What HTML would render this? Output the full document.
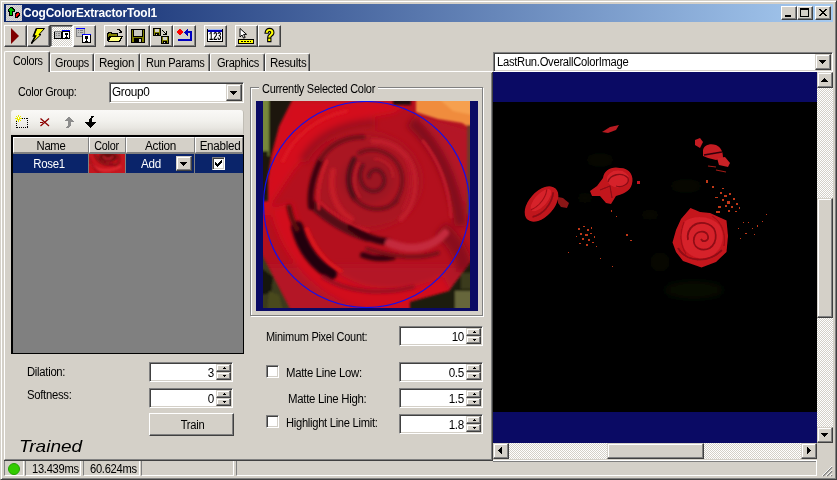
<!DOCTYPE html>
<html>
<head>
<meta charset="utf-8">
<title>CogColorExtractorTool1</title>
<style>
html,body{margin:0;padding:0;}
body{width:837px;height:480px;overflow:hidden;background:#d4d0c8;position:relative;
 font-family:"Liberation Sans",sans-serif;font-size:12px;color:#000;letter-spacing:-0.3px;}
.a{position:absolute;box-sizing:border-box;}
.t{position:absolute;white-space:nowrap;line-height:13px;transform:scaleX(0.93);transform-origin:0 0;}
.t.c{transform-origin:50% 0;}
.t.r{transform-origin:100% 0;}
svg{position:absolute;overflow:visible;}
.btn{border:1px solid;border-color:#fff #404040 #404040 #fff;box-shadow:inset -1px -1px 0 #808080;background:#d4d0c8;}
.sbtn{border:1px solid;border-color:#d4d0c8 #404040 #404040 #d4d0c8;box-shadow:inset -1px -1px 0 #808080, inset 1px 1px 0 #fff;background:#d4d0c8;}
.sunken{border:1px solid;border-color:#808080 #fff #fff #808080;box-shadow:inset 1px 1px 0 #404040, inset -1px -1px 0 #d4d0c8;background:#fff;}
.checker{background-image:conic-gradient(#fff 25%,#d4d0c8 0 50%,#fff 0 75%,#d4d0c8 0);background-size:2px 2px;}
.tab{border:1px solid;border-color:#fff #404040 transparent #fff;border-bottom:0;border-radius:2px 2px 0 0;box-shadow:inset -1px 0 0 #808080;}
.px{shape-rendering:crispEdges;}
.hd{background:#d4d0c8;border:1px solid;border-color:#fff #808080 #808080 #fff;}
.sp{border:1px solid;border-color:#808080 #fff #fff #808080;border-top:0;}
</style>
</head>
<body>
<!-- window frame -->
<div class="a" style="left:0;top:0;width:837px;height:480px;border:1px solid;border-color:#d4d0c8 #404040 #404040 #d4d0c8;box-shadow:inset 1px 1px 0 #fff, inset -1px -1px 0 #808080;"></div>

<!-- title bar -->
<div class="a" style="left:4px;top:4px;width:829px;height:18px;background:linear-gradient(90deg,#0a246a 0%,#a6caf0 100%);"></div>
<div class="a" style="left:6px;top:5px;width:16px;height:16px;background:#c8c8c8;background-image:conic-gradient(#d8d8d8 25%,#c4c4c4 0 50%,#d8d8d8 0 75%,#c4c4c4 0);background-size:2px 2px;"></div>
<svg class="px" style="left:6px;top:5px" width="16" height="16" viewBox="0 0 16 16">
 <path d="M4 2h3v1h1v1h1v3h-2v4h-4v-4h-1v-3h1v-1h1z" fill="#000"/>
 <path d="M4 3h2v1h1v1h1v1h-2v4h-2v-4h-1v-2h1z" fill="#00c000"/>
 <path d="M9 8h1v-1h3v1h1v3h-1v1h-1v1h-3z" fill="#000"/>
 <path d="M10 9h1v-1h2v2h-1v1h-1v1h-1z" fill="#ff0000"/>
</svg>
<div class="t" style="left:23px;top:6px;color:#fff;font-weight:bold;font-size:12px;line-height:14px;letter-spacing:-0.14px;transform:scaleX(0.99);">CogColorExtractorTool1</div>
<!-- caption buttons -->
<div class="a btn" style="left:781px;top:6px;width:16px;height:14px;"></div>
<div class="a" style="left:785px;top:15px;width:6px;height:2px;background:#000;"></div>
<div class="a btn" style="left:797px;top:6px;width:16px;height:14px;"></div>
<div class="a" style="left:800px;top:8px;width:9px;height:9px;border:1px solid #000;border-top-width:2px;"></div>
<div class="a btn" style="left:815px;top:6px;width:16px;height:14px;"></div>
<svg class="px" style="left:819px;top:9px" width="8" height="7" viewBox="0 0 8 7"><path d="M0 0h2v1h1v1h2v-1h1v-1h2v1h-1v1h-1v1h-1v1h1v1h1v1h1v1h-2v-1h-1v-1h-2v1h-1v1h-2v-1h1v-1h1v-1h1v-1h-1v-1h-1v-1h-1z" fill="#000"/></svg>

<!-- TOOLBAR -->
<div class="a btn" style="left:4px;top:25px;width:23px;height:22px;"></div>
<div class="a btn" style="left:27px;top:25px;width:23px;height:22px;"></div>
<div class="a checker" style="left:50px;top:25px;width:23px;height:22px;border:1px solid;border-color:#404040 #fff #fff #404040;box-shadow:inset 1px 1px 0 #808080;"></div>
<div class="a btn" style="left:73px;top:25px;width:23px;height:22px;"></div>
<div class="a btn" style="left:104px;top:25px;width:23px;height:22px;"></div>
<div class="a btn" style="left:127px;top:25px;width:23px;height:22px;"></div>
<div class="a btn" style="left:150px;top:25px;width:23px;height:22px;"></div>
<div class="a btn" style="left:173px;top:25px;width:23px;height:22px;"></div>
<div class="a btn" style="left:204px;top:25px;width:23px;height:22px;"></div>
<div class="a btn" style="left:235px;top:25px;width:23px;height:22px;"></div>
<div class="a btn" style="left:258px;top:25px;width:23px;height:22px;"></div>
<!-- toolbar icons -->
<svg style="left:7px;top:28px" width="16" height="16" viewBox="0 0 16 16"><path d="M4 0L12 8L4 16z" fill="#800000"/></svg>
<svg style="left:30px;top:28px" width="16" height="16" viewBox="0 0 16 16"><path d="M6.5 0.5h8l-5.5 6h2l-9.5 9l4-7.5h-2z" fill="#ffff00" stroke="#000" stroke-width="1"/><path d="M6.5 0.5l-3 7.5h2l-4 7.5" fill="none" stroke="#000" stroke-width="1.6"/></svg>
<svg class="px" style="left:54px;top:29px" width="16" height="16" viewBox="0 0 16 16">
 <rect x="0" y="2" width="8" height="8" fill="#000"/><rect x="1" y="3" width="6" height="6" fill="#c0c0c0"/><rect x="0" y="2" width="8" height="1" fill="#808080"/>
 <rect x="8" y="2" width="8" height="8" fill="#000"/><rect x="9" y="3" width="6" height="6" fill="#fff"/><rect x="8" y="1" width="8" height="1" fill="#0000ff"/>
 <rect x="11" y="4" width="3" height="2" fill="#000"/><rect x="12" y="6" width="1" height="2" fill="#000"/><rect x="11" y="8" width="3" height="1" fill="#000"/>
 <rect x="2" y="4" width="1" height="1" fill="#808080"/><rect x="4" y="4" width="2" height="1" fill="#808080"/><rect x="2" y="6" width="1" height="1" fill="#808080"/><rect x="4" y="6" width="2" height="1" fill="#808080"/>
</svg>
<svg class="px" style="left:76px;top:28px" width="16" height="16" viewBox="0 0 16 16">
 <rect x="0" y="0" width="9" height="9" fill="#808080"/><rect x="1" y="1" width="7" height="7" fill="#c0c0c0"/><rect x="0" y="0" width="9" height="1" fill="#0000ff"/>
 <rect x="2" y="2" width="1" height="1" fill="#808080"/><rect x="4" y="2" width="3" height="1" fill="#808080"/><rect x="2" y="4" width="1" height="1" fill="#808080"/><rect x="4" y="4" width="3" height="1" fill="#808080"/>
 <rect x="6" y="6" width="9" height="9" fill="#000"/><rect x="7" y="7" width="7" height="7" fill="#fff"/><rect x="6" y="6" width="9" height="1" fill="#0000ff"/>
 <rect x="9" y="8" width="3" height="3" fill="#000"/><rect x="10" y="11" width="1" height="2" fill="#000"/><rect x="9" y="13" width="3" height="1" fill="#000"/>
</svg>
<svg class="px" style="left:107px;top:28px" width="16" height="16" viewBox="0 0 16 16">
 <path d="M0 5h1v-1h4v1h6v3h-8l-2 5h-1z" fill="#000"/><path d="M1 6h1v-1h2v1h6v2h-8l-1 3z" fill="#808000"/>
 <path d="M3 8h13l-3 6h-12z" fill="#000"/><path d="M4 9h10l-2 4h-10z" fill="#ffff80"/>
 <path d="M9 2h1v-1h3v1h1v1h1v-1h0v3h-3v-1h1v-1h-1v-1h-2z" fill="#000"/>
</svg>
<svg class="px" style="left:131px;top:29px" width="14" height="14" viewBox="0 0 14 14">
 <rect x="0" y="0" width="14" height="14" fill="#000"/><rect x="1" y="1" width="12" height="12" fill="#808000"/>
 <rect x="3" y="1" width="8" height="6" fill="#c8c8c0"/><rect x="2" y="1" width="1" height="7" fill="#000"/><rect x="11" y="1" width="1" height="7" fill="#000"/><rect x="2" y="7" width="10" height="1" fill="#000"/>
 <rect x="3" y="9" width="8" height="4" fill="#000"/><rect x="8" y="10" width="2" height="3" fill="#d4d0c8"/>
</svg>
<svg class="px" style="left:153px;top:28px" width="16" height="16" viewBox="0 0 16 16">
 <rect x="0" y="0" width="8" height="8" fill="#000"/><rect x="1" y="1" width="6" height="6" fill="#808000"/><rect x="2" y="1" width="4" height="3" fill="#d4d0c8"/><rect x="2" y="5" width="4" height="2" fill="#000"/><rect x="3" y="6" width="1" height="1" fill="#d4d0c8"/>
 <rect x="8" y="8" width="8" height="8" fill="#000"/><rect x="9" y="9" width="6" height="6" fill="#808000"/><rect x="10" y="9" width="4" height="3" fill="#d4d0c8"/><rect x="10" y="13" width="4" height="2" fill="#000"/><rect x="11" y="14" width="1" height="1" fill="#d4d0c8"/>
 <path d="M9 2h1v1h1v1h1v1h1v-2h1v4h-4v-1h2v-1h-1v-1h-1v-1h-1z" fill="#000"/>
</svg>
<svg class="px" style="left:176px;top:28px" width="16" height="16" viewBox="0 0 16 16">
 <path d="M3 1h2v1h1v1h1v2h-1v1h-1v1h-2v-1h-1v-1h-1v-2h1v-1h1z" fill="#ff0000"/>
 <path d="M8 4h1v-1h1v-1h1v-1h1v2h4v10h-14v-2h12v-6h-2v3h-1v-1h-1v-1h-1v-1h-1z" fill="#0000c0"/>
</svg>
<svg class="px" style="left:207px;top:28px" width="16" height="16" viewBox="0 0 16 16">
 <rect x="0" y="1" width="16" height="13" fill="#000"/><rect x="1" y="2" width="14" height="11" fill="#fff"/><rect x="1" y="1" width="14" height="1" fill="#a0b8f0"/><rect x="1" y="2" width="14" height="2" fill="#0000c0"/>
 
</svg>
<svg class="px" style="left:238px;top:28px" width="16" height="16" viewBox="0 0 16 16">
 <path d="M2 0.5v8.5l2-2l1.6 3.2l1.6-0.8l-1.6-3h3z" fill="#fff" stroke="#000" stroke-width="1" shape-rendering="auto"/>
 <rect x="0" y="11" width="16" height="5" fill="#000"/><rect x="1" y="12" width="14" height="3" fill="#ffff00"/>
 <rect x="3" y="13" width="2" height="1" fill="#000"/><rect x="6" y="13" width="2" height="1" fill="#000"/><rect x="9" y="13" width="2" height="1" fill="#000"/><rect x="12" y="13" width="1" height="1" fill="#000"/>
</svg>
<div class="t c" style="left:207px;top:31px;width:16px;text-align:center;font-size:10px;line-height:11px;letter-spacing:0;font-weight:bold;transform:scaleX(0.74);">123</div>
<div class="t c" style="left:259px;top:27px;width:21px;text-align:center;font-size:16px;line-height:18px;font-weight:bold;letter-spacing:0;color:#ffff00;-webkit-text-stroke:2.4px #000;paint-order:stroke fill;transform:scaleX(0.94);">?</div>

<!-- TAB STRIP -->
<!-- tab page border -->
<div class="a" style="left:4px;top:71px;width:489px;height:388px;border-top:1px solid #fff;border-left:1px solid #fff;"></div>
<div class="a tab" style="left:50px;top:53px;width:44px;height:18px;"></div>
<div class="a tab" style="left:94px;top:53px;width:46px;height:18px;"></div>
<div class="a tab" style="left:140px;top:53px;width:70px;height:18px;"></div>
<div class="a tab" style="left:210px;top:53px;width:55px;height:18px;"></div>
<div class="a tab" style="left:265px;top:53px;width:45px;height:18px;"></div>
<div class="a tab" style="left:4px;top:51px;width:46px;height:21px;background:#d4d0c8;"></div>
<div class="t" style="left:13px;top:55px;transform:scaleX(0.9);">Colors</div>
<div class="t" style="left:55px;top:57px;transform:scaleX(0.9);">Groups</div>
<div class="t" style="left:99px;top:57px;transform:scaleX(0.97);">Region</div>
<div class="t" style="left:146px;top:57px;transform:scaleX(0.92);">Run Params</div>
<div class="t" style="left:217px;top:57px;transform:scaleX(0.92);">Graphics</div>
<div class="t" style="left:270px;top:57px;transform:scaleX(0.96);">Results</div>

<!-- Color Group -->
<div class="t" style="left:18px;top:86px;transform:scaleX(0.9);">Color Group:</div>
<div class="a sunken" style="left:109px;top:82px;width:135px;height:21px;"></div>
<div class="t" style="left:112px;top:86px;transform:scaleX(0.98);">Group0</div>
<div class="a sbtn" style="left:226px;top:84px;width:16px;height:17px;"></div>
<svg class="px" style="left:230px;top:91px" width="7" height="4" viewBox="0 0 7 4"><path d="M0 0h7v1h-1v1h-1v1h-1v1h-1v-1h-1v-1h-1v-1h-1z" fill="#000"/></svg>

<!-- mini toolstrip -->
<div class="a" style="left:11px;top:110px;width:233px;height:24px;background:linear-gradient(180deg,#faf9f7 0%,#f2f1ed 45%,#e8e6e1 75%,#d9d6cf 100%);border-radius:3px 3px 0 0;border-right:1px solid #c0bdb5;"></div>
<svg class="px" style="left:15px;top:115px" width="14" height="14" viewBox="0 0 14 14">
 <path d="M3 3h1v1h-1zM5 3h1v1h-1zM7 3h1v1h-1zM9 3h1v1h-1zM11 3h2v1h-2zM12 5h1v1h-1zM12 7h1v1h-1zM12 9h1v1h-1zM12 11h1v2h-1zM10 12h1v1h-1zM8 12h1v1h-1zM6 12h1v1h-1zM4 12h1v1h-1zM2 12h1v1h-2v-1zM1 10h1v1h-1zM1 8h1v1h-1zM1 6h1v1h-1z" fill="#000"/>
 <path d="M3 0h1v2h1v-1h1v1h-1v1h2v1h-2v1h1v1h-1v-1h-1v2h-1v-2h-1v1h-1v-1h1v-1h-2v-1h2v-1h-1v-1h1v1h1z" fill="#e8e800"/>
 <rect x="3" y="2" width="1" height="2" fill="#fff"/>
</svg>
<svg style="left:40px;top:118px" width="10" height="9" viewBox="0 0 10 9"><path d="M0.5 0.5L9 8M9 0.5L0.5 8" stroke="#8c0000" stroke-width="1.3" fill="none"/><path d="M0 4.5h3" stroke="#8c0000" stroke-width="1"/></svg>
<svg class="px" style="left:63px;top:116px" width="11" height="12" viewBox="0 0 11 12"><path d="M5 0h1v1h1v1h1v1h1v1h1v1h1v1h-3v4h-1v1h-1v1h-3v-1h1v-1h1v-5h-3v-1h1v-1h1v-1h1v-1h1z" fill="#8c8c8c"/></svg>
<svg class="px" style="left:85px;top:116px" width="12" height="12" viewBox="0 0 12 12"><path d="M6 0h3v1h-1v1h-1v4h4v1h-1v1h-1v1h-1v1h-1v1h-1v1h-1v-1h-1v-1h-1v-1h-1v-1h-1v-1h-1v-1h4v-3h1v-1h1z" fill="#000"/></svg>

<!-- grid -->
<div class="a" style="left:11px;top:135px;width:233px;height:219px;background:#808080;border:solid #000;border-width:2px 1px 1px 2px;"></div>
<!-- header cells -->
<div class="a hd" style="left:13px;top:137px;width:76px;height:16px;"></div>
<div class="a hd" style="left:89px;top:137px;width:37px;height:16px;"></div>
<div class="a hd" style="left:126px;top:137px;width:69px;height:16px;"></div>
<div class="a hd" style="left:195px;top:137px;width:48px;height:16px;"></div>
<div class="t c" style="left:13px;top:140px;width:76px;text-align:center;transform:scaleX(0.94);">Name</div>
<div class="t c" style="left:88px;top:140px;width:37px;text-align:center;transform:scaleX(0.9);">Color</div>
<div class="t c" style="left:126px;top:140px;width:69px;text-align:center;transform:scaleX(0.98);">Action</div>
<div class="t c" style="left:196px;top:140px;width:48px;text-align:center;transform:scaleX(0.97);">Enabled</div>
<!-- selected row -->
<div class="a" style="left:13px;top:154px;width:230px;height:19px;background:#0a246a;"></div>
<div class="a" style="left:88px;top:154px;width:1px;height:19px;background:#808080;"></div>
<div class="a" style="left:125px;top:154px;width:1px;height:19px;background:#808080;"></div>
<div class="a" style="left:194px;top:154px;width:1px;height:19px;background:#808080;"></div>
<div class="t c" style="left:11px;top:158px;width:76px;text-align:center;color:#fff;transform:scaleX(0.95);">Rose1</div>
<svg style="left:89px;top:154px" width="36" height="19" viewBox="0 0 36 19">
 <defs><filter id="tb"><feGaussianBlur stdDeviation="0.8"/></filter><clipPath id="tc"><rect width="36" height="19"/></clipPath></defs>
 <g clip-path="url(#tc)"><rect width="36" height="19" fill="#c4161e"/>
 <g filter="url(#tb)" fill="none">
  <ellipse cx="19" cy="3" rx="9" ry="5" fill="#6a0a10"/>
  <path d="M6 0C8 8 16 12 26 10" stroke="#7a0c12" stroke-width="2"/>
  <path d="M28 0C32 4 30 10 26 12" stroke="#8a0e14" stroke-width="2"/>
  <path d="M14 2C16 6 22 6 24 2" stroke="#d02830" stroke-width="1.5"/>
  <path d="M2 10C8 18 22 18 32 12" stroke="#e02a32" stroke-width="2.5"/>
  <path d="M0 4C2 12 6 16 12 19" stroke="#9a1018" stroke-width="1.5"/>
 </g></g>
</svg>
<div class="t c" style="left:126px;top:158px;width:50px;text-align:center;color:#fff;transform:scaleX(0.97);">Add</div>
<div class="a sbtn" style="left:176px;top:156px;width:16px;height:15px;"></div>
<svg class="px" style="left:180px;top:162px" width="7" height="4" viewBox="0 0 7 4"><path d="M0 0h7v1h-1v1h-1v1h-1v1h-1v-1h-1v-1h-1v-1h-1z" fill="#000"/></svg>
<div class="a sunken" style="left:212px;top:157px;width:13px;height:13px;"></div>
<svg class="px" style="left:215px;top:160px" width="7" height="7" viewBox="0 0 7 7"><path d="M0 2h1v1h1v1h1v-1h1v-1h1v-1h1v-1h1v3h-1v1h-1v1h-1v1h-1v1h-1v-1h-1v-1h-1z" fill="#000"/></svg>

<!-- Dilation / Softness / Train -->
<div class="t" style="left:27px;top:366px;transform:scaleX(0.94);">Dilation:</div>
<div class="t" style="left:27px;top:389px;transform:scaleX(0.94);">Softness:</div>
<div class="a sunken" style="left:149px;top:362px;width:84px;height:20px;"></div>
<div class="t r" style="left:151px;top:367px;width:63px;text-align:right;transform:scaleX(0.97);">3</div>
<div class="a sbtn" style="left:216px;top:364px;width:15px;height:8px;"></div>
<div class="a sbtn" style="left:216px;top:372px;width:15px;height:8px;"></div>
<svg class="px" style="left:223px;top:367px" width="3" height="2" viewBox="0 0 3 2"><path d="M1 0h1v1h1v1h-3v-1h1z" fill="#000"/></svg>
<svg class="px" style="left:223px;top:375px" width="3" height="2" viewBox="0 0 3 2"><path d="M0 0h3v1h-1v1h-1v-1h-1z" fill="#000"/></svg>
<div class="a sunken" style="left:149px;top:388px;width:84px;height:20px;"></div>
<div class="t r" style="left:151px;top:393px;width:63px;text-align:right;transform:scaleX(0.97);">0</div>
<div class="a sbtn" style="left:216px;top:390px;width:15px;height:8px;"></div>
<div class="a sbtn" style="left:216px;top:398px;width:15px;height:8px;"></div>
<svg class="px" style="left:223px;top:393px" width="3" height="2" viewBox="0 0 3 2"><path d="M1 0h1v1h1v1h-3v-1h1z" fill="#000"/></svg>
<svg class="px" style="left:223px;top:401px" width="3" height="2" viewBox="0 0 3 2"><path d="M0 0h3v1h-1v1h-1v-1h-1z" fill="#000"/></svg>
<div class="a btn" style="left:149px;top:413px;width:85px;height:23px;"></div>
<div class="t c" style="left:150px;top:419px;width:85px;text-align:center;">Train</div>
<div class="t" style="left:19px;top:437px;font-size:17px;line-height:20px;font-style:italic;letter-spacing:0;transform:scaleX(1.12);transform-origin:0 0;">Trained</div>
<!--LEFT-END-->
<!-- groupbox -->
<div class="a" style="left:251px;top:88px;width:233px;height:229px;border:1px solid #fff;"></div>
<div class="a" style="left:250px;top:87px;width:233px;height:229px;border:1px solid #808080;"></div>
<div class="a" style="left:259px;top:86px;width:119px;height:4px;background:#d4d0c8;"></div>
<div class="t" style="left:262px;top:83px;transform:scaleX(0.915);">Currently Selected Color</div>
<!-- selected colour picture -->
<div class="a" style="left:256px;top:101px;width:222px;height:210px;background:#0a0a64;"></div>
<svg style="left:263px;top:101px" width="207" height="207" viewBox="0 0 207 207">
 <defs>
  <filter id="b1" x="-10%" y="-10%" width="120%" height="120%"><feGaussianBlur stdDeviation="3"/></filter>
  <filter id="b2" x="-10%" y="-10%" width="120%" height="120%"><feGaussianBlur stdDeviation="1.6"/></filter>
  <filter id="b3" x="-10%" y="-10%" width="120%" height="120%"><feGaussianBlur stdDeviation="1"/></filter>
  <clipPath id="pc"><rect width="207" height="207"/></clipPath>
 </defs>
 <g clip-path="url(#pc)">
  <rect width="207" height="207" fill="#b4101e"/>
  <g filter="url(#b1)">
   <path d="M28 0H150L130 12L90 20L55 40L30 70L10 100L0 125V100L8 55L15 25Z" fill="#d4101c"/>
   <path d="M153 12L207 28V115L190 80L165 40Z" fill="#b41628"/>
   <path d="M148 20C170 40 190 70 198 125" stroke="#820e1a" stroke-width="12" fill="none"/>
   <rect x="0" y="165" width="207" height="45" fill="#b41226"/>
   <path d="M18 105C28 150 60 185 100 196C130 202 160 198 185 185" stroke="#d2101c" stroke-width="22" fill="none"/>
   <ellipse cx="104" cy="80" rx="54" ry="48" fill="#aa1624"/>
   <ellipse cx="104" cy="78" rx="26" ry="24" fill="#9c1422"/>
   <path d="M178 128C192 140 200 155 202 170" stroke="#8a0e1a" stroke-width="16" fill="none"/>
   <path d="M40 60C52 36 80 22 112 22" stroke="#a0101c" stroke-width="9" fill="none"/>
  </g>
  <g filter="url(#b2)" fill="none" stroke-linecap="round">
   <path d="M34 126C40 150 53 164 68 173" stroke="#22030a" stroke-width="12"/>
   <path d="M26 106C28 116 30 122 34 128" stroke="#5a0810" stroke-width="5"/>
   <path d="M50 104C65 118 85 130 104 136" stroke="#560812" stroke-width="9"/>
   <path d="M88 126C98 134 112 140 126 141" stroke="#30050c" stroke-width="7"/>
   <path d="M100 154C110 158 120 158 130 156" stroke="#36050a" stroke-width="6"/>
   <path d="M58 58C50 75 46 90 48 106" stroke="#3c0610" stroke-width="6"/>
   <path d="M58 58C66 44 82 36 100 36" stroke="#760c18" stroke-width="5"/>
   <path d="M91 58C84 72 84 86 92 98" stroke="#500814" stroke-width="5"/>
   <path d="M92 98C102 110 122 112 134 100" stroke="#700c18" stroke-width="4"/>
   <path d="M70 70C66 90 72 108 88 118" stroke="#c41a28" stroke-width="6"/>
   <path d="M100 64C94 74 98 88 108 90C118 92 124 82 120 74C116 66 106 68 106 76" stroke="#640c1a" stroke-width="3.5"/>
   <path d="M96 52C112 44 132 52 138 70C142 84 136 98 128 104" stroke="#760e1a" stroke-width="4"/>
   <path d="M110 40C134 40 152 58 152 82C152 98 146 110 138 118" stroke="#c01e2c" stroke-width="5"/>
   <path d="M126 142C150 152 170 146 182 132" stroke="#c42c3e" stroke-width="8"/>
   <path d="M104 148C125 154 150 160 175 152" stroke="#7a0c18" stroke-width="4"/>
   <path d="M60 176C85 192 120 194 150 186" stroke="#9a1020" stroke-width="4"/>
  </g>
  <g filter="url(#b3)">
   <rect x="-3" y="-3" width="10" height="60" fill="#78883a"/>
   <rect x="-3" y="50" width="8" height="50" fill="#1c1a0c"/>
   <path d="M6 -3H30L16 25L8 55L3 90L0 100V55H6Z" fill="#1c1410"/>
   <path d="M153 -3H210V29L199 22L175 18L153 11Z" fill="#f08c3c"/>
   <path d="M175 -3H210V14L190 10Z" fill="#f6a050"/>
   <rect x="130" y="-3" width="18" height="7" fill="#200a08"/>
   <rect x="204" y="24" width="5" height="90" fill="#70382a"/>
   <path d="M-3 150L28 210H-3Z" fill="#3a3a1a"/>
   <path d="M-3 166L10 176L8 192L-3 194Z" fill="#14120a"/>
   <path d="M6 190l10 4l4 16h-16z" fill="#48481f"/>
   <path d="M210 158L186 190L147 201V210H210Z" fill="#1e1a0c"/>
   <rect x="192" y="190" width="18" height="20" fill="#66663a"/>
   <rect x="198" y="172" width="12" height="16" fill="#3a3a1a"/>
  </g>
  <g filter="url(#b3)" fill="none" stroke-linecap="round">
   <path d="M64 60C56 78 54 94 56 108" stroke="#c81c28" stroke-width="3"/>
   <path d="M96 62C90 74 90 86 97 96" stroke="#b41a28" stroke-width="2.5"/>
   <path d="M44 128C52 150 64 162 78 170" stroke="#d8141e" stroke-width="4"/>
   <path d="M56 100C70 114 88 124 106 130" stroke="#c01826" stroke-width="3"/>
   <path d="M112 58C122 58 130 66 130 76" stroke="#b81a28" stroke-width="2.5"/>
   <path d="M144 60C150 76 148 94 140 108" stroke="#b81828" stroke-width="3"/>
   <path d="M20 60C30 36 54 16 84 10" stroke="#dc1420" stroke-width="4"/>
   <path d="M160 40C176 60 186 86 188 116" stroke="#c01a2a" stroke-width="3"/>
  </g>
  <circle cx="103.5" cy="103.5" r="103" fill="none" stroke="#1010f0" stroke-width="1.2"/>
 </g>
</svg>

<!-- min pixel count etc -->
<div class="t" style="left:266px;top:331px;transform:scaleX(0.915);">Minimum Pixel Count:</div>
<div class="t" style="left:286px;top:367px;transform:scaleX(0.945);">Matte Line Low:</div>
<div class="t" style="left:288px;top:393px;transform:scaleX(0.95);">Matte Line High:</div>
<div class="t" style="left:286px;top:417px;">Highlight Line Limit:</div>
<div class="a sunken" style="left:266px;top:365px;width:13px;height:13px;"></div>
<div class="a sunken" style="left:266px;top:415px;width:13px;height:13px;"></div>

<div class="a sunken" style="left:399px;top:326px;width:84px;height:20px;"></div>
<div class="t r" style="left:401px;top:331px;width:63px;text-align:right;transform:scaleX(0.97);">10</div>
<div class="a sbtn" style="left:466px;top:328px;width:15px;height:8px;"></div>
<div class="a sbtn" style="left:466px;top:336px;width:15px;height:8px;"></div>
<svg class="px" style="left:473px;top:331px" width="3" height="2" viewBox="0 0 3 2"><path d="M1 0h1v1h1v1h-3v-1h1z" fill="#000"/></svg>
<svg class="px" style="left:473px;top:339px" width="3" height="2" viewBox="0 0 3 2"><path d="M0 0h3v1h-1v1h-1v-1h-1z" fill="#000"/></svg>

<div class="a sunken" style="left:399px;top:362px;width:84px;height:20px;"></div>
<div class="t r" style="left:401px;top:367px;width:63px;text-align:right;transform:scaleX(0.97);">0.5</div>
<div class="a sbtn" style="left:466px;top:364px;width:15px;height:8px;"></div>
<div class="a sbtn" style="left:466px;top:372px;width:15px;height:8px;"></div>
<svg class="px" style="left:473px;top:367px" width="3" height="2" viewBox="0 0 3 2"><path d="M1 0h1v1h1v1h-3v-1h1z" fill="#000"/></svg>
<svg class="px" style="left:473px;top:375px" width="3" height="2" viewBox="0 0 3 2"><path d="M0 0h3v1h-1v1h-1v-1h-1z" fill="#000"/></svg>

<div class="a sunken" style="left:399px;top:388px;width:84px;height:20px;"></div>
<div class="t r" style="left:401px;top:393px;width:63px;text-align:right;transform:scaleX(0.97);">1.5</div>
<div class="a sbtn" style="left:466px;top:390px;width:15px;height:8px;"></div>
<div class="a sbtn" style="left:466px;top:398px;width:15px;height:8px;"></div>
<svg class="px" style="left:473px;top:393px" width="3" height="2" viewBox="0 0 3 2"><path d="M1 0h1v1h1v1h-3v-1h1z" fill="#000"/></svg>
<svg class="px" style="left:473px;top:401px" width="3" height="2" viewBox="0 0 3 2"><path d="M0 0h3v1h-1v1h-1v-1h-1z" fill="#000"/></svg>

<div class="a sunken" style="left:399px;top:414px;width:84px;height:20px;"></div>
<div class="t r" style="left:401px;top:419px;width:63px;text-align:right;transform:scaleX(0.97);">1.8</div>
<div class="a sbtn" style="left:466px;top:416px;width:15px;height:8px;"></div>
<div class="a sbtn" style="left:466px;top:424px;width:15px;height:8px;"></div>
<svg class="px" style="left:473px;top:419px" width="3" height="2" viewBox="0 0 3 2"><path d="M1 0h1v1h1v1h-3v-1h1z" fill="#000"/></svg>
<svg class="px" style="left:473px;top:427px" width="3" height="2" viewBox="0 0 3 2"><path d="M0 0h3v1h-1v1h-1v-1h-1z" fill="#000"/></svg>
<!--CENTER-END-->
<!-- right: combobox -->
<div class="a sunken" style="left:493px;top:52px;width:340px;height:20px;"></div>
<div class="t" style="left:497px;top:56px;transform:scaleX(0.935);">LastRun.OverallColorImage</div>
<div class="a sbtn" style="left:815px;top:54px;width:16px;height:16px;"></div>
<svg class="px" style="left:819px;top:60px" width="7" height="4" viewBox="0 0 7 4"><path d="M0 0h7v1h-1v1h-1v1h-1v1h-1v-1h-1v-1h-1v-1h-1z" fill="#000"/></svg>
<!-- display -->
<div class="a" style="left:491px;top:73px;width:1px;height:387px;background:#808080;"></div>
<div class="a" style="left:492px;top:72px;width:1px;height:389px;background:#404040;"></div>
<div class="a" style="left:493px;top:72px;width:324px;height:371px;background:#000;"></div>
<div class="a" style="left:493px;top:72px;width:324px;height:30px;background:#0a0a64;"></div>
<div class="a" style="left:493px;top:412px;width:324px;height:31px;background:#0a0a64;"></div>
<svg style="left:493px;top:72px" width="324" height="371" viewBox="493 72 324 371">
 <defs><filter id="rb" x="-20%" y="-20%" width="140%" height="140%"><feGaussianBlur stdDeviation="0.45"/></filter><filter id="fb" x="-50%" y="-50%" width="200%" height="200%"><feGaussianBlur stdDeviation="4"/></filter></defs>
 <!-- faint dark foliage -->
 <g filter="url(#fb)" opacity="0.6">
  <ellipse cx="694" cy="290" rx="30" ry="9" fill="#0a1206"/><ellipse cx="600" cy="160" rx="14" ry="7" fill="#080e05"/><ellipse cx="686" cy="186" rx="16" ry="7" fill="#080e05"/>
  <ellipse cx="660" cy="262" rx="10" ry="10" fill="#070c04"/><ellipse cx="585" cy="198" rx="8" ry="5" fill="#0c1006"/><ellipse cx="650" cy="215" rx="10" ry="5" fill="#0a0c04"/>
 </g>
 <g filter="url(#rb)">
  <!-- left rose -->
  <g transform="rotate(-48 541.5 204)">
   <ellipse cx="541.5" cy="204" rx="21" ry="12.5" fill="#c0141c"/>
   <ellipse cx="544" cy="201" rx="14" ry="6" fill="#d6222a"/>
   <path d="M526 206C534 212 548 212 558 205" stroke="#8a0c14" stroke-width="1.6" fill="none"/>
   <path d="M530 200C538 204 550 203 556 198" stroke="#a01018" stroke-width="1.2" fill="none"/>
  </g>
  <path d="M558 197l5 1l6 5l-2 5l-6-1l-3-4z" fill="#8a1418"/>
  <!-- middle rose -->
  <path d="M590 191L597 186L603 178C604 170 612 166 620 168C630 168 634 176 632 184C630 192 622 194 616 196L611 204L606 203L600 196L592 196Z" fill="#c2161e"/>
  <ellipse cx="618" cy="179" rx="11" ry="8.5" fill="#d6242c"/>
  <path d="M608 182C610 174 622 172 628 178C630 184 622 188 616 186" stroke="#8a0c14" stroke-width="1.3" fill="none"/>
  <path d="M600 190L610 186L612 198" stroke="#8a0c14" stroke-width="1.2" fill="none"/>
  <rect x="637" y="181" width="3" height="3" fill="#c01820"/>
  <!-- big rose -->
  <path d="M690.5 208L700 212L710 213L726.5 220.5L728 236L726.5 252L716 262L701.5 267.5L683 261L676 252L672.5 242.5L676 230L681 219Z" fill="#c4161e"/>
  <path d="M684 222C694 214 712 216 720 226C726 236 722 250 712 256C700 262 686 256 682 244C680 236 680 228 684 222Z" fill="#d6202a"/>
  <path d="M688 240C686 228 696 220 708 224C718 228 718 242 710 248C702 252 692 248 694 238C696 230 706 230 708 236C709 241 703 243 701 239" stroke="#8e0c14" stroke-width="1.7" fill="none"/>
  <path d="M678 248C686 262 708 264 722 250" stroke="#900e16" stroke-width="1.8" fill="none"/>
  <path d="M684 222C680 232 680 244 686 254" stroke="#a81018" stroke-width="1.4" fill="none"/>
  <path d="M712 216C722 222 726 234 724 246" stroke="#a81018" stroke-width="1.4" fill="none"/>
  <!-- upper right rose -->
  <path d="M695 140l5-2l3 4l-3 6l-5-3z" fill="#c41c24"/>
  <path d="M703 150C704 145 710 143 716 145C721 147 723 152 723 158L716 160L708 158L703 156Z" fill="#c41a22"/>
  <path d="M717 158l8-1l5 6l-2 4l-9-2z" fill="#c82028"/>
  <path d="M704 155L722 152" stroke="#300408" stroke-width="1.6" fill="none"/>
  <path d="M708 166l8 1M716 170l10 2" stroke="#a01c18" stroke-width="1.2" fill="none"/>
  <!-- top small -->
  <path d="M602 132l8-5l9-2l-3 5l-8 3z" fill="#b81a20"/>
 </g>
 <!-- speckles -->
 <g fill="#c03818">
  <rect x="578" y="228" width="2" height="2"/><rect x="583" y="226" width="2" height="1"/><rect x="587" y="229" width="2" height="2"/><rect x="591" y="227" width="1" height="2"/><rect x="580" y="233" width="2" height="2"/><rect x="585" y="234" width="3" height="2"/><rect x="590" y="233" width="2" height="1"/><rect x="582" y="238" width="2" height="2"/><rect x="588" y="239" width="2" height="2"/><rect x="594" y="236" width="1" height="2"/><rect x="579" y="243" width="2" height="1"/><rect x="586" y="244" width="2" height="2"/><rect x="592" y="242" width="2" height="1"/><rect x="596" y="246" width="1" height="1"/><rect x="576" y="236" width="1" height="1"/>
  <rect x="720" y="192" width="2" height="2"/><rect x="724" y="195" width="3" height="2"/><rect x="729" y="193" width="2" height="2"/><rect x="722" y="199" width="2" height="2"/><rect x="727" y="201" width="3" height="3"/><rect x="733" y="198" width="2" height="2"/><rect x="725" y="205" width="2" height="2"/><rect x="731" y="206" width="2" height="2"/><rect x="736" y="203" width="2" height="2"/><rect x="718" y="206" width="3" height="2"/><rect x="728" y="210" width="2" height="2"/><rect x="712" y="186" width="2" height="2"/><rect x="706" y="180" width="2" height="3"/><rect x="715" y="197" width="3" height="1"/><rect x="735" y="211" width="2" height="1"/><rect x="739" y="207" width="1" height="2"/><rect x="716" y="211" width="4" height="2"/><rect x="722" y="188" width="2" height="1"/>
  <rect x="748" y="222" width="1" height="1"/><rect x="752" y="228" width="1" height="1"/><rect x="757" y="225" width="1" height="2"/><rect x="762" y="221" width="1" height="1"/><rect x="745" y="233" width="2" height="1"/><rect x="766" y="214" width="1" height="1"/><rect x="740" y="238" width="1" height="1"/><rect x="754" y="234" width="1" height="1"/><rect x="738" y="228" width="1" height="1"/><rect x="743" y="222" width="1" height="1"/>
  <rect x="568" y="252" width="1" height="1"/><rect x="600" y="258" width="1" height="1"/><rect x="612" y="266" width="1" height="1"/><rect x="626" y="234" width="2" height="2"/><rect x="630" y="240" width="2" height="1"/><rect x="611" y="210" width="1" height="2"/><rect x="616" y="216" width="1" height="1"/>
 </g>
</svg>
<!--ROSES-END-->
<!-- v scrollbar -->
<div class="a checker" style="left:817px;top:72px;width:16px;height:371px;"></div>
<div class="a sbtn" style="left:817px;top:72px;width:16px;height:16px;"></div>
<svg class="px" style="left:821px;top:78px" width="7" height="4" viewBox="0 0 7 4"><path d="M3 0h1v1h1v1h1v1h1v1h-7v-1h1v-1h1v-1h1z" fill="#000"/></svg>
<div class="a sbtn" style="left:817px;top:198px;width:16px;height:120px;"></div>
<div class="a sbtn" style="left:817px;top:427px;width:16px;height:16px;"></div>
<svg class="px" style="left:821px;top:433px" width="7" height="4" viewBox="0 0 7 4"><path d="M0 0h7v1h-1v1h-1v1h-1v1h-1v-1h-1v-1h-1v-1h-1z" fill="#000"/></svg>
<!-- h scrollbar -->
<div class="a checker" style="left:493px;top:443px;width:324px;height:16px;"></div>
<div class="a sbtn" style="left:493px;top:443px;width:16px;height:16px;"></div>
<svg class="px" style="left:498px;top:447px" width="4" height="7" viewBox="0 0 4 7"><path d="M3 0h1v7h-1v-1h-1v-1h-1v-1h-1v-1h1v-1h1v-1h1z" fill="#000"/></svg>
<div class="a sbtn" style="left:607px;top:443px;width:97px;height:16px;"></div>
<div class="a sbtn" style="left:801px;top:443px;width:16px;height:16px;"></div>
<svg class="px" style="left:807px;top:447px" width="4" height="7" viewBox="0 0 4 7"><path d="M0 0h1v1h1v1h1v1h1v1h-1v1h-1v1h-1v1h-1z" fill="#000"/></svg>
<div class="a" style="left:817px;top:443px;width:16px;height:16px;background:#d4d0c8;"></div>
<!--RIGHT-END-->
<!-- status bar -->
<div class="a" style="left:5px;top:459px;width:487px;height:1px;background:#808080;"></div>
<div class="a" style="left:4px;top:460px;width:489px;height:1px;background:#404040;"></div>
<div class="a" style="left:493px;top:460px;width:324px;height:1px;background:#fff;"></div>
<div class="a" style="left:493px;top:461px;width:324px;height:1px;background:#808080;"></div>
<div class="a sp" style="left:4px;top:461px;width:20px;height:15px;"></div>
<div class="a sp" style="left:25px;top:461px;width:56px;height:15px;"></div>
<div class="a sp" style="left:83px;top:461px;width:57px;height:15px;"></div>
<div class="a sp" style="left:141px;top:461px;width:93px;height:15px;"></div>
<div class="a sp" style="left:236px;top:461px;width:581px;height:15px;"></div>
<div class="a" style="left:8px;top:463px;width:12px;height:12px;border-radius:50%;background:#33cc00;border:1px solid #22a000;"></div>
<div class="t" style="left:32px;top:463px;">13.439ms</div>
<div class="t" style="left:90px;top:463px;">60.624ms</div>
<svg style="left:822px;top:466px" width="11" height="11" viewBox="0 0 11 11">
 <path d="M10 1L1 10M10 5L5 10M10 9L9 10" stroke="#808080" stroke-width="1.5" fill="none"/>
 <path d="M10 0L0 10M10 4L4 10M10 8L8 10" stroke="#fff" stroke-width="0.9" fill="none"/>
</svg>
<!--STATUS-END-->
</body>
</html>
